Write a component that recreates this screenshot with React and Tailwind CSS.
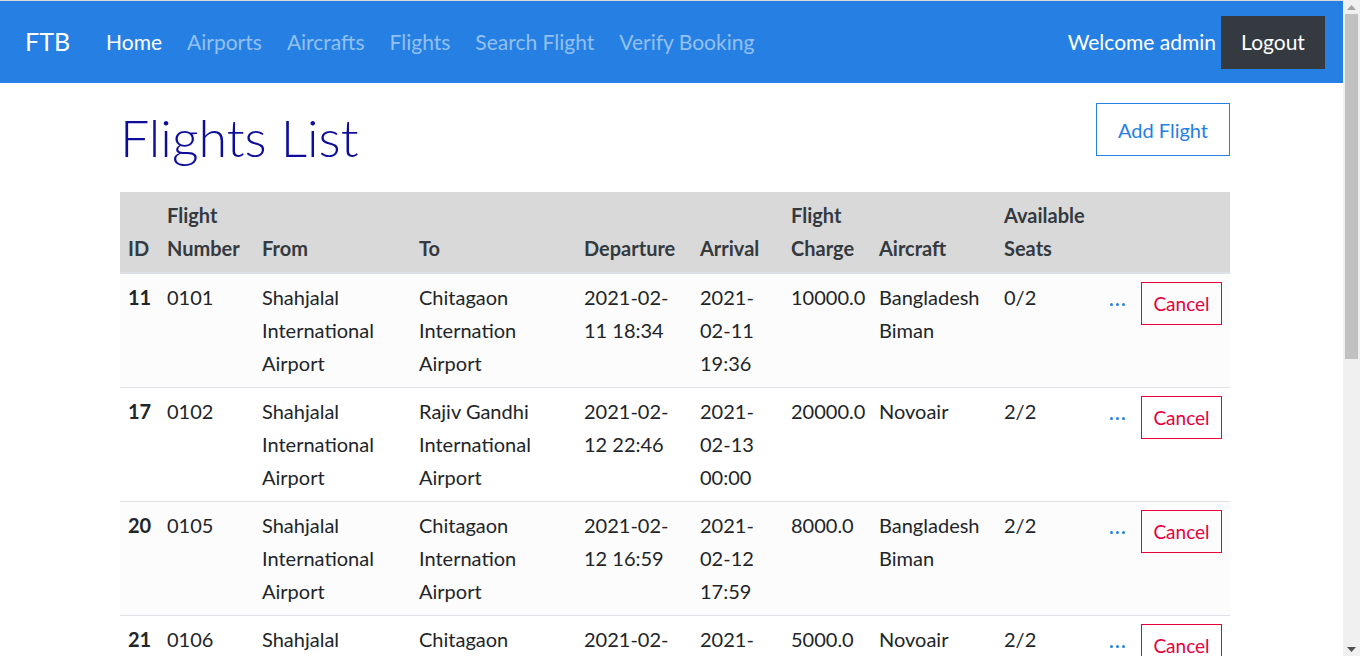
import React from "react";

const rows = [
  { id: "11", num: "0101", from: "Shahjalal International Airport", to: "Chitagaon Internation Airport", dep: "2021-02-11 18:34", arr: "2021-02-11 19:36", charge: "10000.0", aircraft: "Bangladesh Biman", seats: "0/2" },
  { id: "17", num: "0102", from: "Shahjalal International Airport", to: "Rajiv Gandhi International Airport", dep: "2021-02-12 22:46", arr: "2021-02-13 00:00", charge: "20000.0", aircraft: "Novoair", seats: "2/2" },
  { id: "20", num: "0105", from: "Shahjalal International Airport", to: "Chitagaon Internation Airport", dep: "2021-02-12 16:59", arr: "2021-02-12 17:59", charge: "8000.0", aircraft: "Bangladesh Biman", seats: "2/2" },
  { id: "21", num: "0106", from: "Shahjalal International Airport", to: "Chitagaon Internation Airport", dep: "2021-02-13 10:20", arr: "2021-02-13 11:20", charge: "5000.0", aircraft: "Novoair", seats: "2/2" },
];

function Scrollbar() {
  return (
    <div className="flex h-full w-[17px] shrink-0 flex-col bg-[#f0f0f0]">
      <div className="flex h-[14px] items-center justify-center">
        <svg width="9" height="5" viewBox="0 0 9 5"><path d="M4.5 0 L9 5 L0 5 Z" fill="#a3a3a3" /></svg>
      </div>
      <div className="mx-[2px] h-[345px] bg-[#c1c1c1]" />
      <div className="flex-1" />
      <div className="flex h-[14px] items-center justify-center">
        <svg width="9" height="5" viewBox="0 0 9 5"><path d="M0 0 L9 0 L4.5 5 Z" fill="#505050" /></svg>
      </div>
    </div>
  );
}

export default function App() {
  return (
    <div className="flex h-[656px] overflow-hidden bg-white text-[#212529]" style={{ fontFamily: "Lato, 'Liberation Sans', sans-serif" }}>
      <div className="min-w-0 flex-1 overflow-hidden">
        <div className="h-px bg-[#dadada]" />
        <nav className="flex h-[82px] items-center bg-[#2680e3] pl-[25px] pr-[18px]">
          <span className="text-[25px] text-white">FTB</span>
          <div className="ml-[36px] flex items-center gap-[25px] text-[21px]">
            <span className="text-white">Home</span>
            <span className="text-[#93c0f1]">Airports</span>
            <span className="text-[#93c0f1]">Aircrafts</span>
            <span className="text-[#93c0f1]">Flights</span>
            <span className="text-[#93c0f1]">Search Flight</span>
            <span className="text-[#93c0f1]">Verify Booking</span>
          </div>
          <div className="ml-auto flex items-center gap-[5px]">
            <span className="text-[21px] text-white">Welcome admin</span>
            <button className="flex h-[53px] w-[104px] items-center justify-center bg-[#343a40] text-[21px] text-white">Logout</button>
          </div>
        </nav>
        <main className="ml-[120px] w-[1110px] pb-10">
          <div className="flex items-start justify-between pt-[20px]">
            <h1 className="mt-[2px] text-[52px] font-light leading-[64px] text-[#0d0d99]">Flights List</h1>
            <button className="flex h-[53px] w-[134px] items-center justify-center border border-[#2680e3] text-[20px] text-[#2680e3]">Add Flight</button>
          </div>
          <table className="mt-[23px] w-full table-fixed border-collapse text-[20px] leading-[33px]">
            <colgroup>
              <col className="w-[39px]" />
              <col className="w-[95px]" />
              <col className="w-[157px]" />
              <col className="w-[165px]" />
              <col className="w-[116px]" />
              <col className="w-[91px]" />
              <col className="w-[88px]" />
              <col className="w-[125px]" />
              <col className="w-[104px]" />
              <col className="w-[33px]" />
              <col className="w-[97px]" />
            </colgroup>
            <thead>
              <tr className="border-b-2 border-[#dee2e6] bg-[#d9d9d9] text-left align-bottom font-bold text-[#343a40]">
                <th className="px-[8px] py-[7px]">ID</th>
                <th className="px-[8px] py-[7px]">Flight Number</th>
                <th className="px-[8px] py-[7px]">From</th>
                <th className="px-[8px] py-[7px]">To</th>
                <th className="px-[8px] py-[7px]">Departure</th>
                <th className="px-[8px] py-[7px]">Arrival</th>
                <th className="px-[8px] py-[7px]">Flight Charge</th>
                <th className="px-[8px] py-[7px]">Aircraft</th>
                <th className="px-[8px] py-[7px]">Available Seats</th>
                <th />
                <th />
              </tr>
            </thead>
            <tbody>
              {rows.map((r, i) => (
                <tr key={r.id} className={`border-b border-[#dee2e6] align-top ${i % 2 === 0 ? "bg-[#fcfcfc]" : "bg-white"}`}>
                  <td className="px-[8px] py-[7px] font-bold">{r.id}</td>
                  <td className="px-[8px] py-[7px]">{r.num}</td>
                  <td className="px-[8px] py-[7px]">{r.from}</td>
                  <td className="px-[8px] py-[7px]">{r.to}</td>
                  <td className="px-[8px] py-[7px]">{r.dep}</td>
                  <td className="px-[8px] py-[7px]">{r.arr}</td>
                  <td className="px-[8px] py-[7px]">{r.charge}</td>
                  <td className="px-[8px] py-[7px]">{r.aircraft}</td>
                  <td className="px-[8px] py-[7px]">{r.seats}</td>
                  <td className="py-[7px] pl-[10px]">
                    <span className="mt-[22px] flex gap-[3px]">
                      <span className="h-[3px] w-[3px] rounded-full bg-[#2680e3]" />
                      <span className="h-[3px] w-[3px] rounded-full bg-[#2680e3]" />
                      <span className="h-[3px] w-[3px] rounded-full bg-[#2680e3]" />
                    </span>
                  </td>
                  <td className="py-[7px] pl-[8px]">
                    <button className="mt-[1px] flex h-[43px] w-[81px] items-center justify-center border border-[#e8003d] text-[19px] text-[#e8003d]">Cancel</button>
                  </td>
                </tr>
              ))}
            </tbody>
          </table>
        </main>
      </div>
      <Scrollbar />
    </div>
  );
}
